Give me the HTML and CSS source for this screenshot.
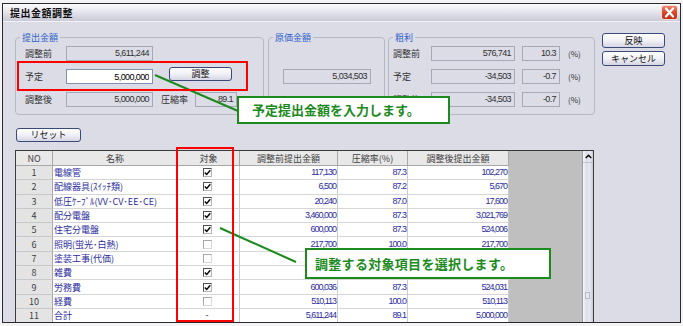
FILE: index.html
```html
<!DOCTYPE html>
<html lang="ja">
<head>
<meta charset="utf-8">
<title>提出金額調整</title>
<link rel="stylesheet" href="styles.css">
</head>
<body>
<div class="window">
  <div class="titlebar">
    <span class="title">提出金額調整</span>
    <span class="close"><svg width="13" height="11" viewBox="0 0 13 11"><path d="M3 1.5 L10 9.5 M10 1.5 L3 9.5" stroke="#fff" stroke-width="2.2" stroke-linecap="round"/></svg></span>
  </div>
  <div class="client">
    <div class="top">
      <fieldset class="group g1">
        <legend>提出金額</legend>
        <div class="rows">
          <div class="row"><span class="lbl">調整前</span><span class="field w87 num">5,611,244</span></div>
          <div class="row"><span class="lbl">予定</span><input class="input num" value="5,000,000"><button class="btn adjust">調整</button></div>
          <div class="row"><span class="lbl">調整後</span><span class="field w87 num">5,000,000</span><span class="lbl2">圧縮率</span><span class="field w42 num">89.1</span></div>
        </div>
      </fieldset>
      <fieldset class="group g2">
        <legend>原価金額</legend>
        <div class="single"><span class="field w88 num">5,034,503</span></div>
      </fieldset>
      <fieldset class="group g3">
        <legend>粗利</legend>
        <div class="rows">
          <div class="row"><span class="lbl">調整前</span><span class="field w84 num">576,741</span><span class="field w38 num">10.3</span><span class="pct">(%)</span></div>
          <div class="row"><span class="lbl">予定</span><span class="field w84 num">-34,503</span><span class="field w38 num">-0.7</span><span class="pct">(%)</span></div>
          <div class="row"><span class="lbl">調整後</span><span class="field w84 num">-34,503</span><span class="field w38 num">-0.7</span><span class="pct">(%)</span></div>
        </div>
      </fieldset>
      <div class="side">
        <button class="btn">反映</button>
        <button class="btn">キャンセル</button>
      </div>
    </div>
    <div class="reset-row"><button class="btn reset">リセット</button></div>
    <div class="grid">
      <div class="table">
        <div class="c h">NO</div><div class="c h">名称</div><div class="c h">対象</div><div class="c h">調整前提出金額</div><div class="c h">圧縮率(%)</div><div class="c h">調整後提出金額</div>

        <div class="c no">1</div><div class="c nm">電線管</div><div class="c chk"><span class="cb on"><svg width="7" height="7" viewBox="0 0 7 7"><path d="M0.8 3.4 L2.7 5.4 L6.3 1.2" fill="none" stroke="#000" stroke-width="1.4"/></svg></span></div><div class="c n">117,130</div><div class="c n">87.3</div><div class="c n">102,270</div>

        <div class="c no">2</div><div class="c nm">配線器具(ｽｲｯﾁ類)</div><div class="c chk"><span class="cb on"><svg width="7" height="7" viewBox="0 0 7 7"><path d="M0.8 3.4 L2.7 5.4 L6.3 1.2" fill="none" stroke="#000" stroke-width="1.4"/></svg></span></div><div class="c n">6,500</div><div class="c n">87.2</div><div class="c n">5,670</div>

        <div class="c no">3</div><div class="c nm">低圧ｹｰﾌﾞﾙ(VV･CV･EE･CE)</div><div class="c chk"><span class="cb on"><svg width="7" height="7" viewBox="0 0 7 7"><path d="M0.8 3.4 L2.7 5.4 L6.3 1.2" fill="none" stroke="#000" stroke-width="1.4"/></svg></span></div><div class="c n">20,240</div><div class="c n">87.0</div><div class="c n">17,600</div>

        <div class="c no">4</div><div class="c nm">配分電盤</div><div class="c chk"><span class="cb on"><svg width="7" height="7" viewBox="0 0 7 7"><path d="M0.8 3.4 L2.7 5.4 L6.3 1.2" fill="none" stroke="#000" stroke-width="1.4"/></svg></span></div><div class="c n">3,460,000</div><div class="c n">87.3</div><div class="c n">3,021,769</div>

        <div class="c no">5</div><div class="c nm">住宅分電盤</div><div class="c chk"><span class="cb on"><svg width="7" height="7" viewBox="0 0 7 7"><path d="M0.8 3.4 L2.7 5.4 L6.3 1.2" fill="none" stroke="#000" stroke-width="1.4"/></svg></span></div><div class="c n">600,000</div><div class="c n">87.3</div><div class="c n">524,006</div>

        <div class="c no">6</div><div class="c nm">照明(蛍光･白熱)</div><div class="c chk"><span class="cb"></span></div><div class="c n">217,700</div><div class="c n">100.0</div><div class="c n">217,700</div>

        <div class="c no">7</div><div class="c nm">塗装工事(代価)</div><div class="c chk"><span class="cb"></span></div><div class="c n"></div><div class="c n"></div><div class="c n"></div>

        <div class="c no">8</div><div class="c nm">雑費</div><div class="c chk"><span class="cb on"><svg width="7" height="7" viewBox="0 0 7 7"><path d="M0.8 3.4 L2.7 5.4 L6.3 1.2" fill="none" stroke="#000" stroke-width="1.4"/></svg></span></div><div class="c n"></div><div class="c n"></div><div class="c n"></div>

        <div class="c no">9</div><div class="c nm">労務費</div><div class="c chk"><span class="cb on"><svg width="7" height="7" viewBox="0 0 7 7"><path d="M0.8 3.4 L2.7 5.4 L6.3 1.2" fill="none" stroke="#000" stroke-width="1.4"/></svg></span></div><div class="c n">600,036</div><div class="c n">87.3</div><div class="c n">524,031</div>

        <div class="c no">10</div><div class="c nm">経費</div><div class="c chk"><span class="cb"></span></div><div class="c n">510,113</div><div class="c n">100.0</div><div class="c n">510,113</div>

        <div class="c no">11</div><div class="c nm">合計</div><div class="c chk"><span class="dash">-</span></div><div class="c n">5,611,244</div><div class="c n">89.1</div><div class="c n">5,000,000</div>
      </div>
      <div class="filler"></div>
      <div class="sb">
        <div class="sb-up"><svg width="7" height="5" viewBox="0 0 7 5"><path d="M0.8 4 L3.5 1.2 L6.2 4" fill="none" stroke="#000" stroke-width="1.4"/></svg></div>
        <div class="sb-track"><div class="sb-thumb"></div></div>
      </div>
    </div>
  </div>
</div>

<div class="annot">
  <svg class="lines" width="683" height="326" viewBox="0 0 683 326">
    <line x1="155" y1="75" x2="238" y2="111" stroke="#1c8a1c" stroke-width="2"/>
    <line x1="220" y1="228" x2="296" y2="262" stroke="#1c8a1c" stroke-width="2"/>
  </svg>
  <div class="redbox r1"></div>
  <div class="redbox r2"></div>
  <div class="callout c1">予定提出金額を入力します。</div>
  <div class="callout c2">調整する対象項目を選択します。</div>
</div>
</body>
</html>
```
FILE: styles.css
```css
* { box-sizing: border-box; }
html, body { margin: 0; padding: 0; }
body {
  position: relative;
  width: 683px;
  height: 326px;
  overflow: hidden;
  background: #f4f4f6;
  font-family: "Noto Sans CJK JP", sans-serif;
  font-size: 9px;
  line-height: 11px;
  color: #303030;
}

.window {
  margin: 3px 0 0 2px;
  width: 679px;
  height: 320px;
  border: 1px solid #2a2a2a;
  background: #dcdce6;
  display: flex;
  flex-direction: column;
  overflow: hidden;
}

.titlebar {
  flex: none;
  height: 18px;
  display: flex;
  align-items: center;
  justify-content: space-between;
  padding: 0 2px 0 7px;
  background: linear-gradient(#fbfbfd, #e6e6ee 45%, #cacad8);
  border-bottom: 1px solid #f2f2f6;
}
.title {
  font-weight: bold;
  font-size: 10px;
  letter-spacing: 0.5px;
  color: #101010;
}
.close {
  width: 17px;
  height: 15px;
  border: 1px solid #f4dcd6;
  border-radius: 3px;
  background: linear-gradient(#ee846c, #d9472e 50%, #c02a14);
  display: flex;
  align-items: center;
  justify-content: center;
}

.client {
  flex: 1;
  min-height: 0;
  padding: 10px 0 0 12px;
}

.top {
  display: flex;
  align-items: stretch;
  height: 83px;
}
.group {
  margin: 0;
  padding: 0;
  min-width: 0;
  border: 1px solid #b6b8c6;
  border-radius: 4px;
}
.group legend {
  margin-left: 4px;
  padding: 0 2px;
  color: #2f62c8;
  font-size: 9px;
  line-height: 11px;
}
.g1 { width: 249px; }
.g2 { width: 117px; margin-left: 4px; }
.g3 { width: 207px; margin-left: 3px; }

.rows {
  display: flex;
  flex-direction: column;
  gap: 8px;
  padding: 3px 0 0 9px;
}
.g3 .rows { padding-left: 4px; }
.row {
  display: flex;
  align-items: center;
  height: 15px;
}
.lbl { width: 41px; }
.g3 .lbl { width: 38px; }
.lbl2 { margin-left: 8px; width: 34px; }
.pct { margin-left: 8px; font-size: 8px; }

.num {
  font-family: "Liberation Sans", sans-serif;
  letter-spacing: -0.6px;
}
.field {
  height: 15px;
  border: 1px solid #a6a8b6;
  background: #dcdce6;
  text-align: right;
  padding-right: 3px;
  line-height: 13px;
  color: #303030;
}
.w87 { width: 87px; }
.w88 { width: 88px; }
.w42 { width: 42px; }
.w84 { width: 84px; }
.w38 { width: 38px; margin-left: 7px; }

.input {
  width: 87px;
  height: 15px;
  margin: 0;
  border: 1px solid #7f94b4;
  background: #fff;
  text-align: right;
  padding: 0 3px;
  font-size: 9px;
  color: #000;
  outline: none;
}

.single { padding: 26px 0 0 14px; display: flex; }

.btn {
  width: 63px;
  height: 15px;
  padding: 0;
  margin: 0;
  font-family: "Noto Sans CJK JP", sans-serif;
  font-size: 9px;
  line-height: 12px;
  color: #101010;
  border: 1px solid #3a4a78;
  border-radius: 3px;
  background: linear-gradient(#ffffff, #f0f0f6 50%, #d6d6e4);
}
.btn.adjust {
  margin-left: 16px;
  height: 14px;
  align-self: flex-start;
  margin-top: -2px;
}
.side {
  display: flex;
  flex-direction: column;
  gap: 3px;
  margin-left: 7px;
  padding-top: 1px;
}
.reset-row { padding: 13px 0 0 1px; }
.btn.reset { width: 65px; height: 14px; }

.grid {
  margin-top: 8px;
  width: 579px;
  height: 180px;
  display: flex;
  border: 1px solid #3a3a3a;
  border-bottom: none;
}
.table {
  display: grid;
  grid-template-columns: 37px 125px 62px 98px 70px 101px;
  grid-template-rows: 15px;
  grid-auto-rows: 14.3px;
  align-content: start;
  background: #fff;
}
.c {
  display: flex;
  align-items: center;
  white-space: nowrap;
  overflow: hidden;
  background: #fff;
  border-right: 1px solid #cacaca;
  border-bottom: 1px solid #d6d6d6;
}
.h {
  justify-content: center;
  background: #e8e8e8;
  border-color: #a8a8a8;
  color: #404040;
}
.no {
  justify-content: center;
  background: #e4e4e4;
  border-right-color: #a8a8a8;
  border-bottom-color: #c8c8c8;
  color: #404040;
}
.nm { padding-left: 1px; color: #2c2ca0; }
.n {
  justify-content: flex-end;
  padding-right: 1px;
  color: #2c2ca0;
  font-family: "Liberation Sans", sans-serif;
  letter-spacing: -1px;
}
.chk { justify-content: center; padding-right: 3px; }
.cb {
  width: 9px;
  height: 9px;
  background: #fff;
  border: 1px solid;
  border-color: #a6a6a6 #d8d8d8 #d8d8d8 #a6a6a6;
  display: flex;
  align-items: center;
  justify-content: center;
}
.cb.on { border-color: #505050 #b4b4b4 #b4b4b4 #505050; }
.dash { color: #2c2ca0; font-family: "Liberation Sans", sans-serif; }

.filler { width: 73px; background: #bfbfbf; }
.sb {
  width: 11px;
  display: flex;
  flex-direction: column;
  border-left: 1px solid #9c9ca8;
  background: linear-gradient(to right, #f6f6fa, #dedeea 35%, #e8e8f0 70%, #c8c8d4);
}
.sb-up {
  height: 12px;
  display: flex;
  align-items: center;
  justify-content: center;
  border-bottom: 1px solid #c4c4ce;
}
.sb-track { flex: 1; padding: 129px 0 0 2px; }
.sb-thumb {
  width: 5px;
  height: 7px;
  background: #e8e8f0;
  border: 1px solid #b8b8c4;
}

.annot { position: absolute; left: 0; top: 0; width: 683px; height: 326px; pointer-events: none; }
.lines { position: absolute; left: 0; top: 0; }
.redbox {
  position: absolute;
  border: 2px solid #ff0000;
}
.r1 { left: 17px; top: 61px; width: 231px; height: 30px; }
.r2 { left: 176px; top: 147px; width: 58px; height: 175px; }
.callout {
  position: absolute;
  border: 2px solid #1c8a1c;
  background: #fff;
  color: #1c8a1c;
  font-family: "Noto Sans CJK JP", sans-serif;
  font-weight: bold;
  font-size: 13px;
  line-height: 16px;
  display: flex;
  align-items: center;
  white-space: nowrap;
}
.c1 { left: 237px; top: 96px; width: 213px; height: 28px; padding-left: 13px; }
.c2 { left: 305px; top: 248px; width: 246px; height: 31px; padding-left: 8px; letter-spacing: 0.3px; }
```
